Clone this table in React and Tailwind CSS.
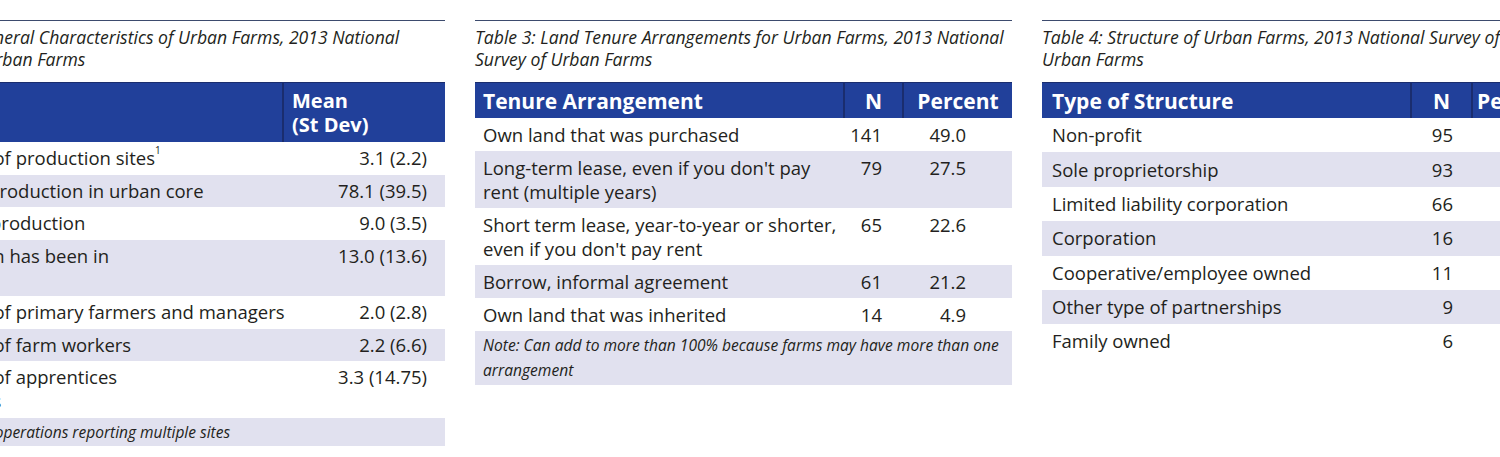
import React from "react";

const t2 = {
  title: ["Table 2: General Characteristics of Urban Farms, 2013 National", "Survey of Urban Farms"],
  rows: [
    [<>Number of production sites<sup className="text-[10px] align-[6px]">1</sup></>, "3.1 (2.2)"],
    ["Percent production in urban core", "78.1 (39.5)"],
    ["Years in production", "9.0 (3.5)"],
    [<>Operation has been in<br />business</>, "13.0 (13.6)"],
    ["Number of primary farmers and managers", "2.0 (2.8)"],
    ["Number of farm workers", "2.2 (6.6)"],
    [<>Number of apprentices<br />or interns</>, "3.3 (14.75)"],
  ],
  note: <><sup className="not-italic text-[9px]">1</sup>Among all operations reporting multiple sites</>,
};

const t3 = {
  title: ["Table 3: Land Tenure Arrangements for Urban Farms, 2013 National", "Survey of Urban Farms"],
  rows: [
    ["Own land that was purchased", "141", "49.0"],
    ["Long-term lease, even if you don't pay rent (multiple years)", "79", "27.5"],
    ["Short term lease, year-to-year or shorter, even if you don't pay rent", "65", "22.6"],
    ["Borrow, informal agreement", "61", "21.2"],
    ["Own land that was inherited", "14", "4.9"],
  ],
  note: "Note: Can add to more than 100% because farms may have more than one arrangement",
};

const t4 = {
  title: ["Table 4: Structure of Urban Farms, 2013 National Survey of", "Urban Farms"],
  rows: [
    ["Non-profit", "95", "33.0"],
    ["Sole proprietorship", "93", "32.3"],
    ["Limited liability corporation", "66", "22.9"],
    ["Corporation", "16", "5.6"],
    ["Cooperative/employee owned", "11", "3.8"],
    ["Other type of partnerships", "9", "3.1"],
    ["Family owned", "6", "2.1"],
  ],
};

function Title({ lines }) {
  return (
    <div className="border-t border-[#3d4b6e] pt-[5px] mb-[12px]">
      <p className="italic text-[17.6px] leading-[22px] text-[#231f20] whitespace-nowrap">
        {lines[0]}
        <br />
        {lines[1]}
      </p>
    </div>
  );
}

const shade = (i) => (i % 2 === 1 ? "bg-[#e1e1ef]" : "bg-white");

function Table2() {
  return (
    <div className="w-[537px] shrink-0">
      <Title lines={t2.title} />
      <table className="w-full table-fixed border-collapse text-[18.5px] leading-[24px] text-[#231f20]">
        <colgroup>
          <col className="w-[375px]" />
          <col className="w-[162px]" />
        </colgroup>
        <thead>
          <tr className="bg-[#21409a] text-white font-bold text-[20px]">
            <th className="border-t border-[#1a2d6e]"></th>
            <th className="border-t border-l-2 border-[#1a2d6e] text-left font-bold leading-[24px] pl-[8px] pt-[6px] pb-[5px]">
              Mean
              <br />
              (St Dev)
            </th>
          </tr>
        </thead>
        <tbody>
          {t2.rows.map((r, i) => (
            <tr key={i} className={shade(i)}>
              <td className="pl-[9px] py-[4.25px] align-top whitespace-nowrap">{r[0]}</td>
              <td className="pr-[18px] py-[4.25px] text-right align-top">{r[1]}</td>
            </tr>
          ))}
          <tr className="bg-[#e1e1ef]">
            <td colSpan={2} className="pl-[9px] py-[3px] italic text-[15.5px] leading-[22px] whitespace-nowrap">
              {t2.note}
            </td>
          </tr>
        </tbody>
      </table>
    </div>
  );
}

function Table3() {
  return (
    <div className="w-[537px] shrink-0">
      <Title lines={t3.title} />
      <table className="w-full table-fixed border-collapse text-[18.5px] leading-[24px] text-[#231f20]">
        <colgroup>
          <col className="w-[369px]" />
          <col className="w-[59px]" />
          <col className="w-[109px]" />
        </colgroup>
        <thead>
          <tr className="bg-[#21409a] text-white text-[21px] leading-[24px]">
            <th className="border-t border-[#1a2d6e] text-left font-bold pl-[8px] py-[5.5px]">Tenure Arrangement</th>
            <th className="border-t border-l-2 border-[#1a2d6e] font-bold text-center">N</th>
            <th className="border-t border-l-2 border-[#1a2d6e] font-bold text-center">Percent</th>
          </tr>
        </thead>
        <tbody>
          {t3.rows.map((r, i) => (
            <tr key={i} className={shade(i)}>
              <td className="pl-[8px] py-[4.5px] align-top">{r[0]}</td>
              <td className="pr-[21px] py-[4.5px] text-right align-top">{r[1]}</td>
              <td className="pr-[46px] py-[4.5px] text-right align-top">{r[2]}</td>
            </tr>
          ))}
          <tr className="bg-[#e1e1ef]">
            <td colSpan={3} className="pl-[8px] py-[2px] italic text-[15.6px] leading-[25px]">
              {t3.note}
            </td>
          </tr>
        </tbody>
      </table>
    </div>
  );
}

function Table4() {
  return (
    <div className="w-[537px] shrink-0">
      <Title lines={t4.title} />
      <table className="w-full table-fixed border-collapse text-[18.5px] leading-[24px] text-[#231f20]">
        <colgroup>
          <col className="w-[369px]" />
          <col className="w-[61px]" />
          <col className="w-[107px]" />
        </colgroup>
        <thead>
          <tr className="bg-[#21409a] text-white text-[21px] leading-[24px]">
            <th className="border-t border-[#1a2d6e] text-left font-bold pl-[10px] py-[5.5px]">Type of Structure</th>
            <th className="border-t border-l-2 border-[#1a2d6e] font-bold text-center">N</th>
            <th className="border-t border-l-2 border-[#1a2d6e] font-bold text-left pl-[4px]">Percent</th>
          </tr>
        </thead>
        <tbody>
          {t4.rows.map((r, i) => (
            <tr key={i} className={shade(i)}>
              <td className="pl-[10px] py-[5.2px] align-top">{r[0]}</td>
              <td className="pr-[19px] py-[5.2px] text-right align-top">{r[1]}</td>
              <td className="pr-[40px] py-[5.2px] text-right align-top">{r[2]}</td>
            </tr>
          ))}
        </tbody>
      </table>
    </div>
  );
}

export default function App() {
  return (
    <div className="w-[1500px] h-[457px] overflow-hidden bg-white font-['Open_Sans',sans-serif]">
      <div className="flex gap-[30px] ml-[-92px] pt-[20px]">
        <Table2 />
        <Table3 />
        <Table4 />
      </div>
    </div>
  );
}
